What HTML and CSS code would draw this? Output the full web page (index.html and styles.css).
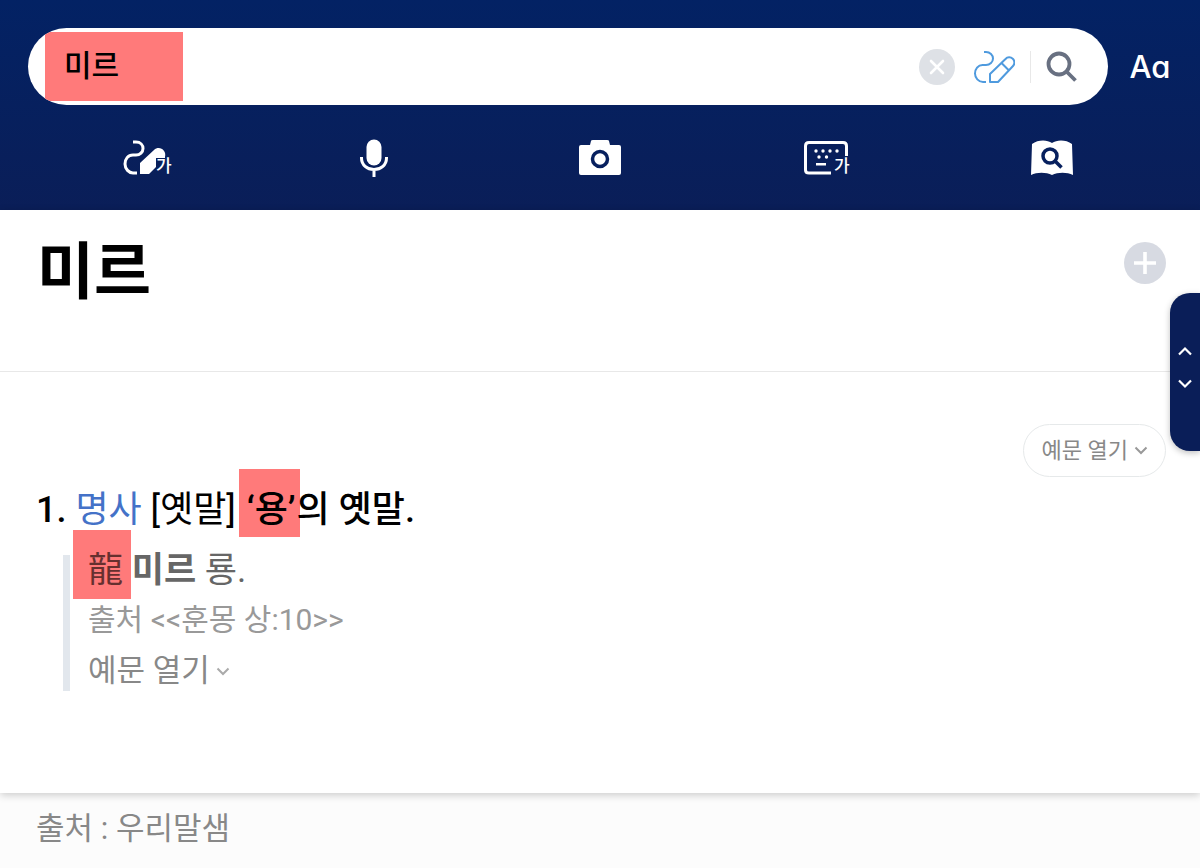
FILE: index.html
```html
<!DOCTYPE html>
<html lang="ko">
<head>
    <meta charset="UTF-8">
    <meta name="viewport" content="width=device-width, initial-scale=1.0">
    <title>미르 - 국어사전</title>
    <link rel="stylesheet" href="styles.css">
</head>
<body>
    <header class="header">
        <form class="search-row">
            <div class="search-box">
                <div class="query">
                    <input class="query-input" type="text" value="미르" aria-label="검색어">
                </div>
                <div class="search-actions">
                    <button class="icon-btn clear-btn" type="button" aria-label="지우기">
                        <svg width="36" height="36" viewBox="0 0 36 36">
                            <circle cx="18" cy="18" r="18" fill="#dee1e6"/>
                            <path d="M12 12l12 12M24 12L12 24" stroke="#fff" stroke-width="2.6" stroke-linecap="round"/>
                        </svg>
                    </button>
                    <button class="icon-btn pen-btn" type="button" aria-label="필기 인식">
                        <svg width="42" height="34" viewBox="0 0 42 34" fill="none" stroke="#4f9ade" stroke-width="2" stroke-linejoin="round">
                            <path d="M11 2h2c4 0 7 3 7 6.500s-3 6.500-7 6.500H9.500C5 15 2 19 2 23.500S5.500 32 10 32h3"/>
                            <path d="M17 32v-8L32.500 9a5 5 0 0 1 7.500 7L25 32zM28.500 13l7 7"/>
                        </svg>
                    </button>
                    <button class="icon-btn search-btn" type="submit" aria-label="검색">
                        <svg width="32" height="32" viewBox="0 0 32 32" fill="none" stroke="#687081" stroke-width="3.800">
                            <circle cx="13" cy="13" r="10.500"/>
                            <path d="M20.500 20.500l9 9"/>
                        </svg>
                    </button>
                </div>
            </div>
            <button class="font-btn" type="button" aria-label="글자 크기">Aa</button>
        </form>

        <nav class="tools">
            <button class="icon-btn" type="button" aria-label="필기">
                <svg width="50" height="36" viewBox="0 0 50 36">
                    <path d="M10 2h3c4.500 0 7 3 7 6.500s-3 6.500-7 6.500H10c-5 0-8 4-8 9s4 9 8 9h4" fill="none" stroke="#fff" stroke-width="3"/>
                    <path d="M17 34V23L31 10c5-5 13 0 11 7v1h-9v9l-7 7z" fill="#fff"/>
                    <text class="glyph" x="33" y="32">가</text>
                </svg>
            </button>
            <button class="icon-btn" type="button" aria-label="음성">
                <svg width="30" height="38" viewBox="0 0 30 38">
                    <rect x="7.500" y="0.500" width="15" height="26" rx="7.500" fill="#fff"/>
                    <path d="M2.500 18v1c0 7 5.500 11.500 12.500 11.500S27.500 26 27.500 19v-1M15 30v8" fill="none" stroke="#fff" stroke-width="3"/>
                </svg>
            </button>
            <button class="icon-btn" type="button" aria-label="카메라">
                <svg width="44" height="36" viewBox="0 0 44 36">
                    <path d="M3 5h9l1-4q0-1 2-1h14q2 0 2 1l1 4h9q2 0 2 2v26q0 2-2 2H3q-2 0-2-2V7q0-2 2-2z" fill="#fff"/>
                    <circle cx="22" cy="19" r="7.500" fill="none" stroke="#07205e" stroke-width="3.500"/>
                </svg>
            </button>
            <button class="icon-btn" type="button" aria-label="키보드">
                <svg width="50" height="42" viewBox="-2 -4 50 42">
                    <path d="M43.500 15V5q0-3.500-3.500-3.500H6Q2.500 1.500 2.500 5v24q0 3 3.500 3h22" fill="none" stroke="#fff" stroke-width="3"/>
                    <g fill="#fff">
                        <circle cx="13" cy="10" r="1.700"/>
                        <circle cx="20" cy="10" r="1.700"/>
                        <circle cx="27" cy="10" r="1.700"/>
                        <circle cx="34" cy="10" r="1.700"/>
                        <circle cx="16" cy="16" r="1.700"/>
                        <circle cx="23.500" cy="16" r="1.700"/>
                        <rect x="13" y="22" width="10" height="2.500"/>
                    </g>
                    <text class="glyph" x="31" y="31">가</text>
                </svg>
            </button>
            <button class="icon-btn" type="button" aria-label="사전 찾기">
                <svg width="42" height="36" viewBox="0 0 42 36">
                    <path d="M1 4C7-.5 16-.5 21 3c5-3.500 14-3.500 20 1l1 31c-6-3-15-3-21 0-6-3-15-3-21 0z" fill="#fff"/>
                    <g fill="none" stroke="#07205e" stroke-width="3.500">
                        <circle cx="19" cy="16" r="7"/>
                        <path d="M24 21l6.500 6.500"/>
                    </g>
                </svg>
            </button>
        </nav>
    </header>

    <main class="entry">
        <section class="word">
            <h1>미르</h1>
            <button class="icon-btn" type="button" aria-label="단어장에 추가">
                <svg width="42" height="42" viewBox="0 0 42 42">
                    <circle cx="21" cy="21" r="21" fill="#d7dae2"/>
                    <path d="M21 10v22M10 21h22" stroke="#fff" stroke-width="3.600"/>
                </svg>
            </button>
        </section>

        <section class="meaning">
            <div class="meaning-top">
                <button class="example-btn" type="button">예문 열기
                    <svg width="14" height="9" viewBox="0 0 14 9"><path d="M1.500 1.500L7 7l5.500-5.500" fill="none" stroke="#999" stroke-width="2"/></svg>
                </button>
            </div>
            <p class="definition"><b>1.</b> <a class="pos" href="#">명사</a> [옛말] <b><mark class="mark-word">‘용’</mark>의 옛말.</b></p>
            <div class="quote">
                <p class="quote-text"><mark class="mark-hanja">龍</mark> <b>미르</b> 룡.</p>
                <p class="quote-source">출처 &lt;&lt;훈몽 상:10&gt;&gt;</p>
                <button class="quote-more" type="button">예문 열기
                    <svg width="14" height="9" viewBox="0 0 14 9"><path d="M1.500 1.500L7 7l5.500-5.500" fill="none" stroke="#aaa" stroke-width="2"/></svg>
                </button>
            </div>
        </section>
    </main>

    <footer class="source">출처 : 우리말샘</footer>

    <div class="side-tab">
        <button class="icon-btn" type="button" aria-label="이전">
            <svg width="16" height="10" viewBox="0 0 16 10"><path d="M2 8.500L8 2.500l6 6" fill="none" stroke="#fff" stroke-width="2.200"/></svg>
        </button>
        <button class="icon-btn" type="button" aria-label="다음">
            <svg width="16" height="10" viewBox="0 0 16 10"><path d="M2 1.500l6 6 6-6" fill="none" stroke="#fff" stroke-width="2.200"/></svg>
        </button>
    </div>
</body>
</html>
```
FILE: styles.css
```css
* {
    box-sizing: border-box;
}
body {
    margin: 0;
    min-height: 100vh;
    font-family: Roboto, "Noto Sans CJK KR", sans-serif;
    background: #fcfcfc;
    color: #000;
}
button {
    border: 0;
    padding: 0;
    background: none;
    font-family: inherit;
    cursor: pointer;
}
h1, p {
    margin: 0;
}
svg {
    display: block;
}
.icon-btn {
    display: flex;
    align-items: center;
    justify-content: center;
}
.header {
    padding: 28px 0 33px;
    background: linear-gradient(#032264, #0a1e58);
}
.search-row {
    display: flex;
    align-items: center;
    padding-left: 28px;
}
.search-box {
    flex: 1;
    display: flex;
    align-items: center;
    justify-content: space-between;
    height: 77px;
    padding: 0 30px 0 17px;
    border-radius: 39px;
    background: #fff;
    overflow: hidden;
}
.query {
    display: flex;
    width: 138px;
    height: 69px;
    background: #ff7a7a;
}
.query-input {
    width: 100%;
    padding: 0 0 8px 19px;
    border: 0;
    outline: 0;
    background: none;
    font-family: "Noto Sans CJK KR", sans-serif;
    font-size: 30px;
    font-weight: 500;
    color: #000;
}
.search-actions {
    display: flex;
    align-items: center;
}
.pen-btn {
    margin-left: 18px;
    margin-right: 15px;
}
.search-btn {
    height: 32px;
    padding-left: 15px;
    border-left: 1px solid #e8e8e8;
}
.font-btn {
    width: 92px;
    padding-right: 8px;
    font-family: Inter, sans-serif;
    font-feature-settings: "cv11";
    font-size: 31px;
    font-weight: 500;
    color: #fff;
}
.tools {
    display: flex;
    padding: 34px 35px 0;
}
.tools .icon-btn {
    flex: 1;
    height: 38px;
}
.glyph {
    fill: #fff;
    font-family: "Noto Sans CJK KR", sans-serif;
    font-size: 17px;
    font-weight: 500;
}
.entry {
    background: #fff;
    box-shadow: 0 2px 8px rgba(0, 0, 0, 0.2);
}
.word {
    display: flex;
    align-items: flex-start;
    justify-content: space-between;
    height: 162px;
    padding: 32px 34px 0 37px;
    border-bottom: 1px solid #e8e8e8;
}
.word h1 {
    font-size: 62px;
    line-height: 62px;
    font-weight: 700;
}
.meaning {
    padding: 52px 34px 102px 36px;
}
.meaning-top {
    display: flex;
    justify-content: flex-end;
}
.example-btn {
    display: flex;
    align-items: center;
    justify-content: center;
    gap: 6px;
    height: 53px;
    padding: 0 17px 0 18px;
    border: 1px solid #e6e9ea;
    border-radius: 27px;
    font-size: 22px;
    line-height: 28px;
    color: #888;
}
.definition {
    margin-top: 9px;
    font-size: 36px;
    line-height: 48px;
}
.definition b {
    font-weight: 500;
}
.pos {
    color: #4472c8;
    text-decoration: none;
}
mark {
    background: #ff7a7a;
    color: inherit;
}
.mark-word {
    margin: 0 -3px 0 -6px;
    padding: 20px 4px 6px 8px;
}
.quote {
    margin: 21px 0 0 27px;
    padding-left: 18px;
    border-left: 7px solid #e2e7ed;
}
.quote-text {
    font-size: 35px;
    line-height: 32px;
    color: #666;
}
.mark-hanja {
    margin: 0 -8px 0 -15px;
    padding: 20px 8px 8px 15px;
    color: #66302f;
}
.quote-source {
    margin-top: 9px;
    font-size: 30px;
    line-height: 48px;
    color: #999;
}
.quote-more {
    display: flex;
    align-items: center;
    gap: 6px;
    margin-top: 7px;
    font-size: 31px;
    line-height: 40px;
    color: #888;
}
.source {
    padding: 12px 36px;
    font-size: 31px;
    line-height: 48px;
    color: #888;
}
.side-tab {
    position: absolute;
    top: 293px;
    right: 0;
    display: flex;
    flex-direction: column;
    align-items: center;
    gap: 23px;
    width: 30px;
    height: 158px;
    padding-top: 53px;
    border-radius: 20px 0 0 20px;
    background: #0a1e58;
    box-shadow: 0 2px 6px rgba(0, 0, 0, 0.25);
}
```
